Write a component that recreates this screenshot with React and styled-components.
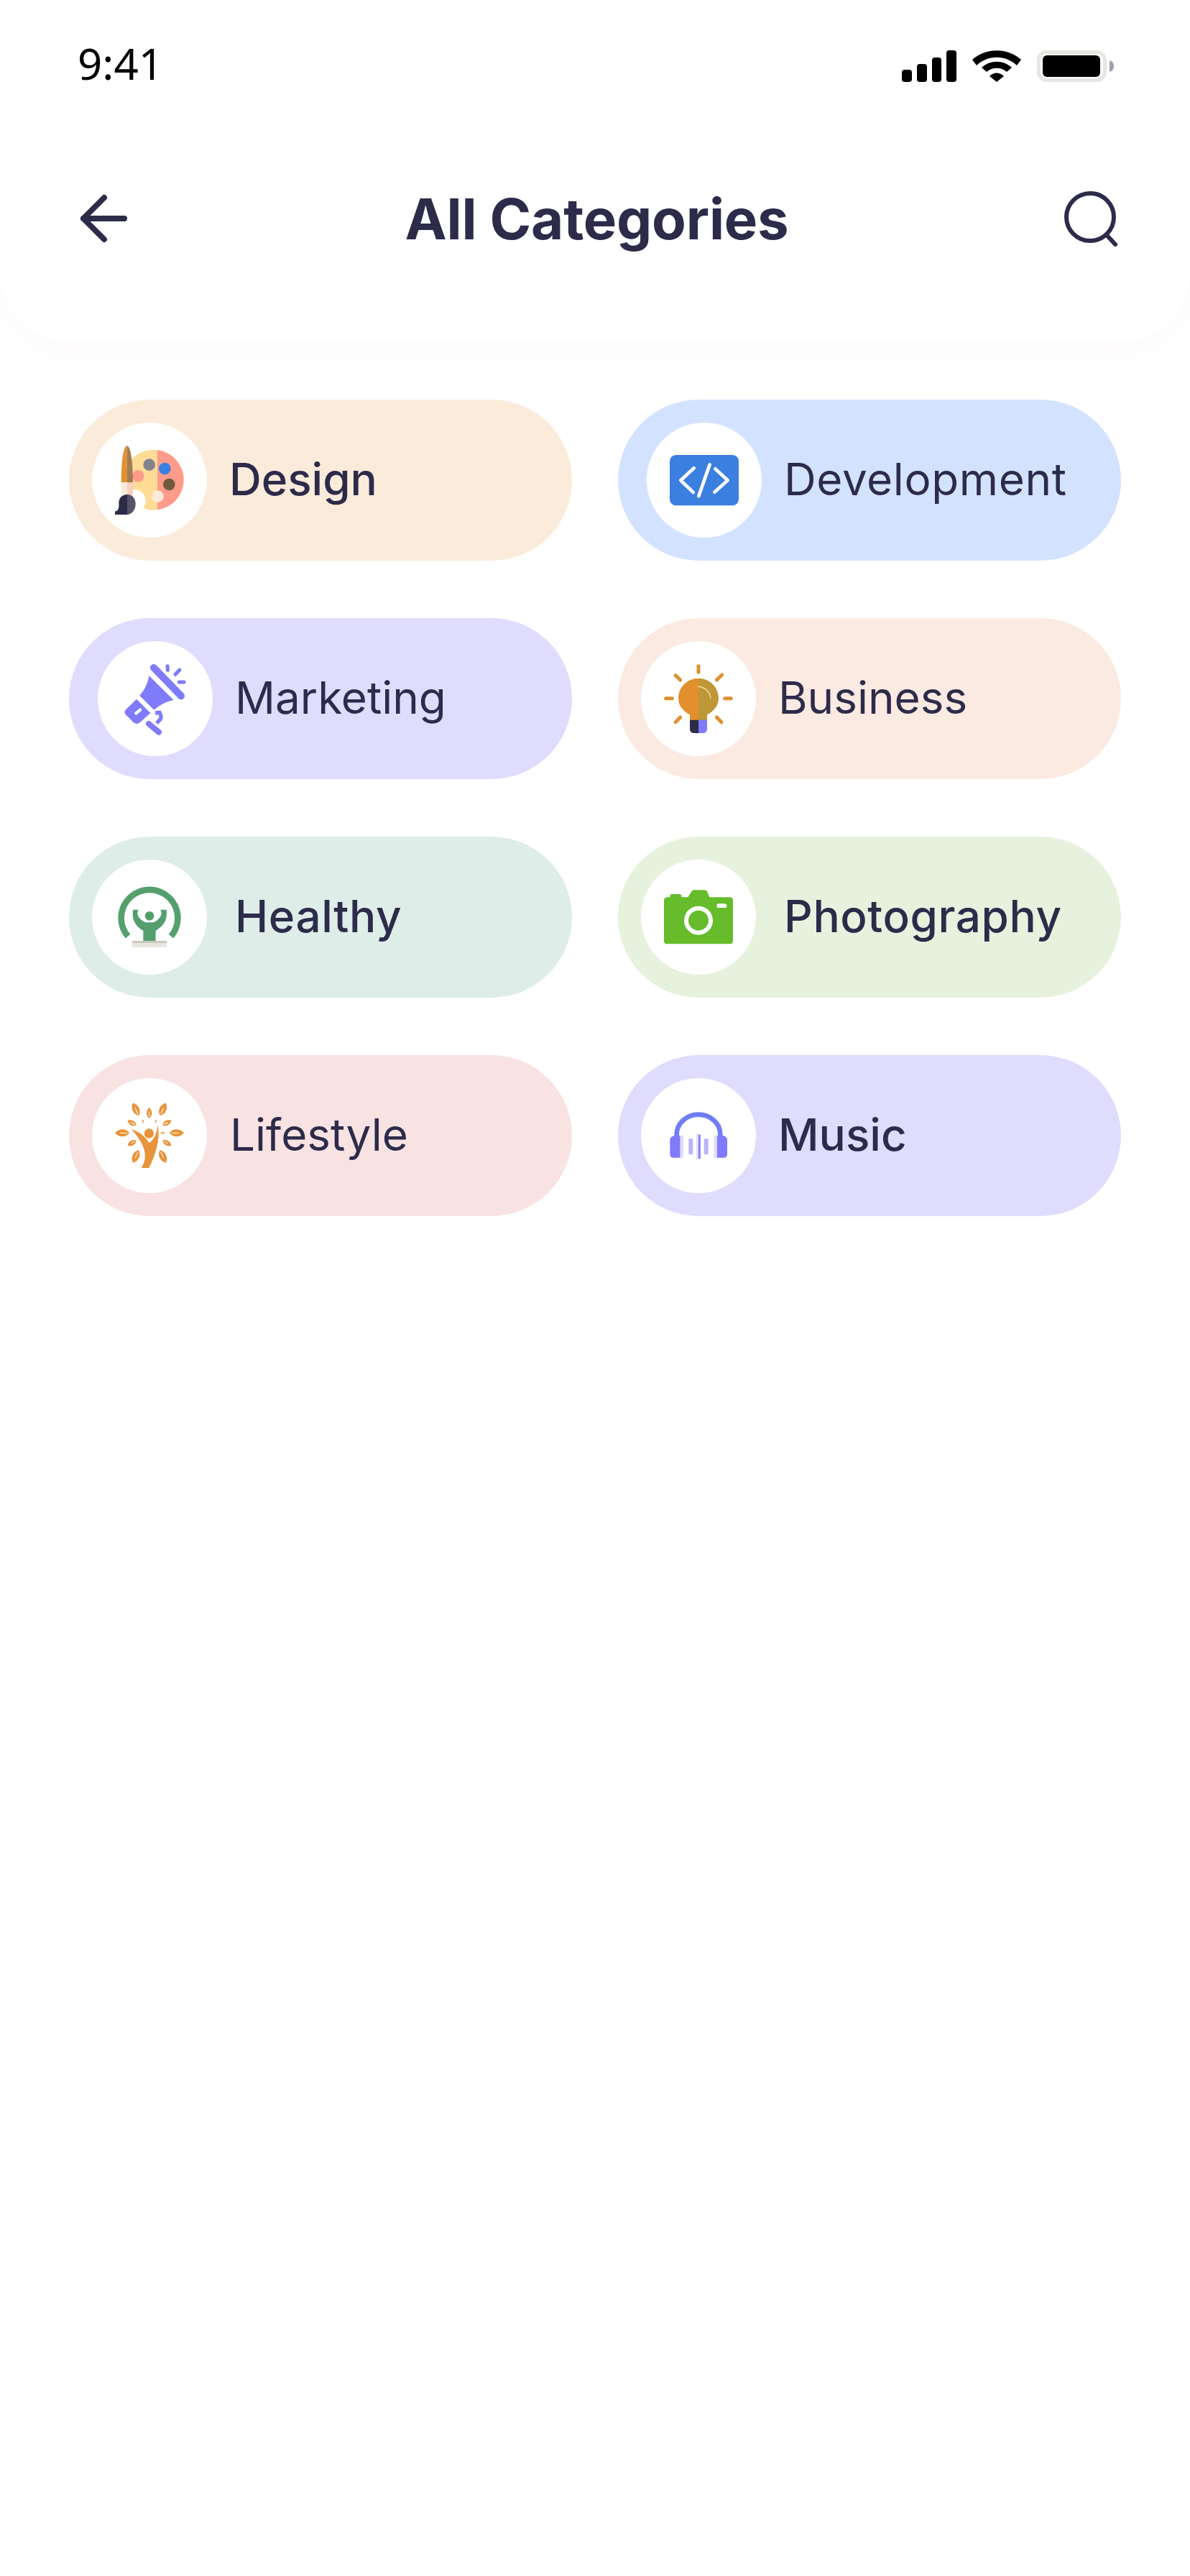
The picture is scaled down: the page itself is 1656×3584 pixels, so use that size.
import React from "react";
import styled, { createGlobalStyle } from "styled-components";

const ink = "#2D2B4A";

const GlobalStyle = createGlobalStyle`
  html, body {
    margin: 0;
    background: #fff;
  }
`;

const Page = styled.div`
  width: 1656px;
  min-height: 3584px;
  background: #fff;
  font-family: Inter, "Liberation Sans", sans-serif;
  color: ${ink};
`;

const HeaderCard = styled.header`
  height: 476px;
  border-radius: 0 0 96px 96px;
  background: #fff;
  box-shadow: 0 12px 36px rgba(235, 205, 185, 0.08);
`;

const StatusBar = styled.div`
  height: 176px;
  display: flex;
  align-items: center;
  justify-content: space-between;
  padding: 0 106px 0 108px;
`;

const Time = styled.span`
  font-family: "Noto Sans", sans-serif;
  font-size: 60px;
  color: #000;
`;

const StatusIcons = styled.div`
  display: flex;
  align-items: center;
  gap: 21px;
  padding-top: 8px;
`;

const NavBar = styled.nav`
  height: 256px;
  display: flex;
  align-items: center;
  justify-content: space-between;
  padding: 0 100px 0 109px;
`;

const Title = styled.h1`
  margin: 0 0 0 4px;
  font-size: 78px;
  font-weight: 700;
  letter-spacing: -0.2px;
`;

const Grid = styled.main`
  display: grid;
  grid-template-columns: repeat(2, 700px);
  gap: 80px 64px;
  padding: 80px 96px 0;
`;

const Pill = styled.div`
  height: 224px;
  display: flex;
  align-items: center;
  gap: ${p => p.$gap}px;
  padding-left: ${p => p.$inset}px;
  border-radius: 112px;
  background: ${p => p.$bg};
`;

const IconCircle = styled.div`
  width: 160px;
  height: 160px;
  flex: none;
  border-radius: 50%;
  background: #fff;
  svg {
    display: block;
  }
`;

const Label = styled.span`
  padding-bottom: 4px;
  font-size: 62px;
  font-weight: ${p => p.$weight};
  letter-spacing: ${p => p.$tracking}px;
`;

const IconSvg = ({ children }) => (
  <svg width="160" height="160" viewBox="0 0 480 480">{children}</svg>
);

const DesignIcon = () => (
  <IconSvg>
    <path d="M273 114A126 126 0 0 1 273 364Z" fill="#FF9B8A" />
    <path d="M273 364A126 126 0 1 1 273 114Z" fill="#FFDC96" />
    <circle cx="239" cy="176" r="25" fill="#83838F" />
    <circle cx="304" cy="192" r="25" fill="#3B7FE0" />
    <circle cx="322" cy="258" r="25" fill="#735A3C" />
    <circle cx="193" cy="223" r="25" fill="#FF9B8A" />
    <circle cx="274" cy="308" r="25" fill="#FBEBD8" />
    <circle cx="176" cy="326" r="48" fill="#fff" />
    <path d="M122 249C122 170 130 97 146 97V249Z" fill="#E38F2F" />
    <path d="M146 97C162 97 171 170 171 249H146Z" fill="#A47C52" />
    <rect x="122" y="249" width="25" height="54" fill="#FAEBDD" />
    <rect x="147" y="249" width="24" height="54" fill="#F8CFC0" />
    <path d="M147 300C126 300 112 315 112 335C114 355 110 370 96 370V384H147Z" fill={ink} />
    <path d="M147 300C170 300 182 318 182 340C182 365 165 384 147 384Z" fill="#55536A" />
  </IconSvg>
);

const DevelopmentIcon = () => (
  <IconSvg>
    <rect x="96" y="135" width="288" height="211" rx="26" fill="#3B7FE0" />
    <g fill="none" stroke="#fff" strokeWidth="14" strokeLinecap="round" strokeLinejoin="round">
      <path d="M197 190L142 241L194 291" />
      <path d="M263 175L217 307" />
      <path d="M286 193L338 241L283 290" />
    </g>
  </IconSvg>
);

const MarketingIcon = () => (
  <IconSvg>
    <g fill="#7F7BFB">
      <path d="M214 144C210 175 195 205 175 227L235 287C262 265 290 250 317 246Z" />
      <path d="M162 242L220 300L176 340Q165 350 150 340L118 308Q107 297 118 285Z" />
    </g>
    <path d="M160 301L177 287" stroke="#fff" strokeWidth="13" strokeLinecap="round" />
    <g fill="none" stroke="#7F7BFB" strokeLinecap="round">
      <path d="M234 111L348 229" strokeWidth="30" />
      <path d="M291 104L292 121" strokeWidth="15" />
      <path d="M324 139L342 120" strokeWidth="15" />
      <path d="M340 171L360 171" strokeWidth="15" />
      <path d="M213 345L255 380" strokeWidth="24" />
      <path d="M240 300L258 298Q268 315 262 325L246 343" strokeWidth="16" strokeLinecap="butt" />
    </g>
  </IconSvg>
);

const BusinessIcon = () => (
  <IconSvg>
    <path d="M240 155C194 155 156 192 156 239C156 268 175 292 204 307V330H240Z" fill="#E28F2D" />
    <path d="M240 155C286 155 324 192 324 239C324 268 305 292 276 307V330H240Z" fill="#BE9736" />
    <path d="M204 329H240V384H222Q204 384 204 366Z" fill={ink} />
    <path d="M240 329H276V366Q276 384 258 384H240Z" fill="#7F7BFB" />
    <path d="M237 189Q285 195 291 239" fill="none" stroke="#FBD9A0" strokeWidth="4" />
    <g stroke="#DD9230" strokeWidth="15" strokeLinecap="round">
      <path d="M240 104V130" />
      <path d="M104 239H130" />
      <path d="M350 239H376" />
      <path d="M144 143L164 162" />
      <path d="M316 162L338 141" />
      <path d="M144 338L164 318" />
      <path d="M316 318L336 338" />
    </g>
  </IconSvg>
);

const HealthyIcon = () => (
  <IconSvg>
    <path d="M150 320A118 118 0 1 1 330 320" fill="none" stroke="#559F6E" strokeWidth="26" />
    <circle cx="240" cy="235" r="19" fill="#559F6E" />
    <path
      d="M171 209H194L190 222C190 240 205 252 222 262H258C275 252 290 240 290 222L286 209H311C314 240 311 270 266 297V339H214V297C170 270 168 240 171 209Z"
      fill="#559F6E"
    />
    <rect x="168" y="339" width="144" height="27" fill="#E8E6DF" />
    <rect x="168" y="339" width="144" height="9" fill="#C9C8BE" />
  </IconSvg>
);

const PhotographyIcon = () => (
  <IconSvg>
    <path
      d="M110 157H121V152Q121 144 130 144H160Q169 144 169 152V157H196L211 133Q215 127 222 127H266Q272 127 276 133L286 157H370Q384 157 384 171V338Q384 352 370 352H110Q96 352 96 338V171Q96 157 110 157Z"
      fill="#66BC2B"
    />
    <circle cx="240" cy="254" r="51" fill="none" stroke="#fff" strokeWidth="18" />
    <rect x="316" y="184" width="42" height="17" rx="8.5" fill="#fff" />
  </IconSvg>
);

// one leaf drawn upright around 0,0 and turned into place
const Leaf = ({ x, y, len, angle }) => (
  <g transform={`translate(${x} ${y}) rotate(${angle})`}>
    <path
      d={`M0 ${-len / 2}C${len * 0.36} ${-len * 0.2} ${len * 0.3} ${len * 0.3} 0 ${len / 2}C${-len * 0.3} ${len * 0.3} ${-len * 0.36} ${-len * 0.2} 0 ${-len / 2}Z`}
      fill="#E8943A"
    />
    <path d={`M0 ${len * 0.35}V${-len * 0.12}`} stroke="#fff" strokeWidth="3" />
  </g>
);

const leaves = [
  [183, 130, 58, -25], [239, 145, 44, 0], [296, 130, 58, 25],
  [167, 187, 42, -60], [313, 187, 42, 60],
  [126, 229, 60, -90], [354, 229, 60, 90],
  [167, 271, 42, -120], [313, 271, 42, 120],
  [183, 327, 58, -155], [296, 327, 58, 155],
  [213, 181, 16, 0], [267, 181, 16, 0], [295, 229, 18, 90],
];

const LifestyleIcon = () => (
  <IconSvg>
    {leaves.map(([x, y, len, angle]) => (
      <Leaf key={`${x}-${y}`} x={x} y={y} len={len} angle={angle} />
    ))}
    <circle cx="238" cy="231" r="20" fill="#E8943A" />
    <path
      d="M164 212C200 225 225 245 238 270C250 265 268 245 276 195C285 260 265 320 238 375H206C235 330 225 280 164 212Z"
      fill="#E8943A"
    />
  </IconSvg>
);

const MusicIcon = () => (
  <IconSvg>
    <path d="M149 244V235A91 83 0 0 1 331 235V244" fill="none" stroke="#6F7EF5" strokeWidth="20" />
    <path d="M164 240V332H136Q121 332 121 317V258Q121 244 140 240Z" fill="#8079FB" />
    <path d="M318 240V332H345Q360 332 360 317V258Q360 244 342 240Z" fill="#8079FB" />
    <rect x="164" y="240" width="13" height="92" fill="#E0DCFE" />
    <rect x="304" y="240" width="14" height="92" fill="#E0DCFE" />
    <rect x="199" y="253" width="18" height="65" fill="#B9B5FB" />
    <rect x="263" y="253" width="18" height="65" fill="#B9B5FB" />
    <rect x="231" y="233" width="18" height="105" fill="#E0DCFE" />
    <rect x="240" y="236" width="8" height="100" fill="#7F7BFB" />
  </IconSvg>
);

const categories = [
  { name: "Design", bg: "#FBEBDA", inset: 32, gap: 31, weight: 500, tracking: 0, Icon: DesignIcon },
  { name: "Development", bg: "#D3E3FF", inset: 40, gap: 31, weight: 400, tracking: 0.6, Icon: DevelopmentIcon },
  { name: "Marketing", bg: "#E0DCFE", inset: 40, gap: 31, weight: 400, tracking: 0, Icon: MarketingIcon },
  { name: "Business", bg: "#FBEAE2", inset: 32, gap: 31, weight: 400, tracking: 0, Icon: BusinessIcon },
  { name: "Healthy", bg: "#DEEDE7", inset: 32, gap: 39, weight: 500, tracking: 0.6, Icon: HealthyIcon },
  { name: "Photography", bg: "#E6F2DD", inset: 32, gap: 39, weight: 500, tracking: 0.6, Icon: PhotographyIcon },
  { name: "Lifestyle", bg: "#F8E3E2", inset: 32, gap: 32, weight: 400, tracking: 0, Icon: LifestyleIcon },
  { name: "Music", bg: "#E0DCFE", inset: 32, gap: 31, weight: 500, tracking: 0, Icon: MusicIcon },
];

const SignalIcon = () => (
  <svg width="76" height="44" viewBox="0 0 76 44">
    <rect x="0" y="27" width="14" height="17" rx="4" />
    <rect x="21" y="19" width="14" height="25" rx="4" />
    <rect x="42" y="10" width="13" height="34" rx="4" />
    <rect x="62" y="0" width="14" height="44" rx="4" />
  </svg>
);

const WifiIcon = () => (
  <svg width="70" height="44" viewBox="0 0 70 44">
    <path d="M1 13C20 -4 50 -4 69 13L63 21C47 6 23 6 7 21Z" />
    <path d="M14 24C26 13 44 13 56 24L49 30C41 23 29 23 21 30Z" />
    <path d="M25 36C31 30 39 30 45 36L35 44Z" />
  </svg>
);

const BatteryIcon = () => (
  <svg width="107" height="44" viewBox="0 0 107 44">
    <rect x="2.5" y="2.5" width="92" height="39" rx="11" fill="none" stroke="#E6E6E3" strokeWidth="5" />
    <rect x="8" y="7" width="80" height="30" rx="6" />
    <path d="M101 14C105 15 107 18 107 22C107 26 105 29 101 30Z" fill="#A0A0AC" />
  </svg>
);

const BackIcon = () => (
  <svg width="70" height="70" viewBox="0 0 70 70" fill="none" stroke={ink} strokeWidth="8" strokeLinecap="round" strokeLinejoin="round">
    <path d="M7 35H64" />
    <path d="M36 6L7 35L36 64" />
  </svg>
);

const SearchIcon = () => (
  <svg width="78" height="80" viewBox="0 0 78 80" fill="none" stroke={ink} strokeWidth="6" strokeLinecap="round">
    <circle cx="39" cy="38" r="33" />
    <path d="M62 63L74 76" />
  </svg>
);

export default function App() {
  return (
    <Page>
      <GlobalStyle />
      <HeaderCard>
        <StatusBar>
          <Time>9:41</Time>
          <StatusIcons>
            <SignalIcon />
            <WifiIcon />
            <BatteryIcon />
          </StatusIcons>
        </StatusBar>
        <NavBar>
          <BackIcon />
          <Title>All Categories</Title>
          <SearchIcon />
        </NavBar>
      </HeaderCard>
      <Grid>
        {categories.map(({ name, bg, inset, gap, weight, tracking, Icon }) => (
          <Pill key={name} $bg={bg} $inset={inset} $gap={gap}>
            <IconCircle>
              <Icon />
            </IconCircle>
            <Label $weight={weight} $tracking={tracking}>{name}</Label>
          </Pill>
        ))}
      </Grid>
    </Page>
  );
}
